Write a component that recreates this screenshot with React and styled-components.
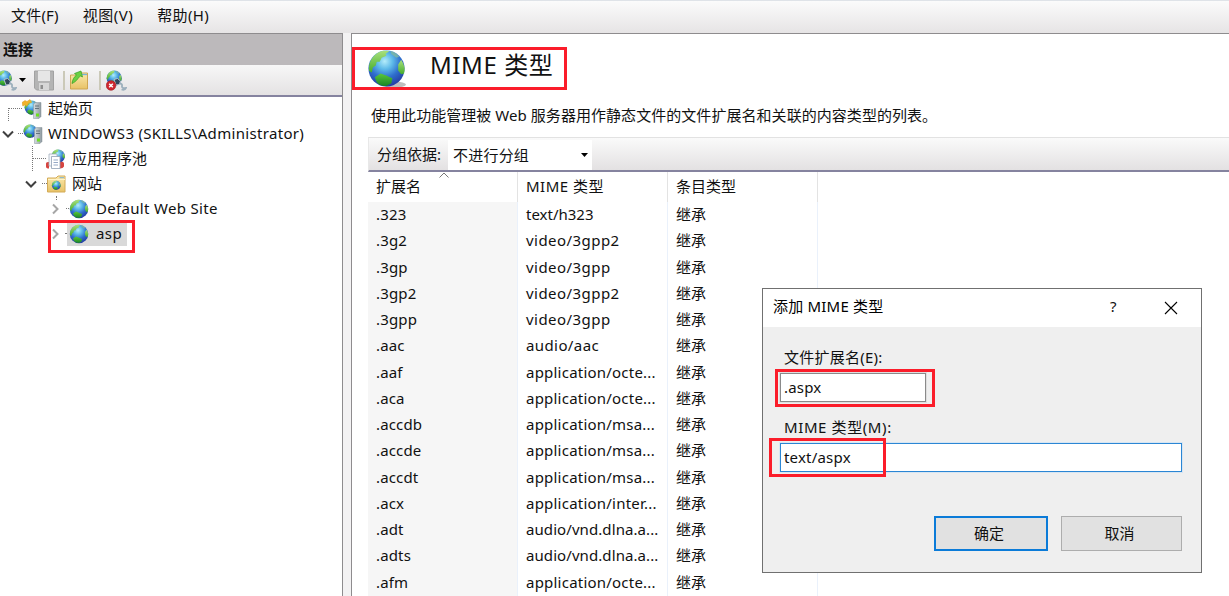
import React from "react";
import styled, { createGlobalStyle } from "styled-components";

const GlobalStyle = createGlobalStyle`
  *, *::before, *::after { box-sizing: border-box; }
  body {
    margin: 0;
    overflow: hidden;
    font-family: "Noto Sans", "Noto Sans CJK SC", sans-serif;
    font-size: 15px;
    color: #111;
  }
`;

const Window = styled.div`
  position: relative;
  display: flex;
  flex-direction: column;
  width: 1229px;
  height: 596px;
  overflow: hidden;
  background: #f3f2f3;
`;

const MenuBar = styled.nav`
  display: flex;
  gap: 24px;
  height: 33px;
  flex: none;
  padding: 0 11px;
  line-height: 29px;
  border-top: 1px solid #dfe3e8;
  background: linear-gradient(#fbfbfb, #e6e4e5);
`;

const Label = styled.span`
  white-space: nowrap;
  letter-spacing: ${(p) => p.$spacing || 0}px;
`;

const Panes = styled.div`
  display: flex;
  flex: 1;
  min-height: 0;
  gap: 8px;
`;

const Sidebar = styled.aside`
  width: 343px;
  flex: none;
  display: flex;
  flex-direction: column;
  border-top: 1px solid #8e8c8e;
  border-right: 1px solid #8e8c8e;
  background: #fff;
`;

const SidebarTitle = styled.div`
  height: 31px;
  padding-left: 3px;
  line-height: 30px;
  font-weight: 700;
  background: #bcb9bb;
`;

const IconBar = styled.div`
  display: flex;
  align-items: center;
  height: 32px;
  flex: none;
  border-bottom: 2px solid #85839f;
  background: linear-gradient(#f7f7f7, #e4e2e3);
`;

const BarSeparator = styled.i`
  width: 2px;
  height: 19px;
  margin: 0 5px 0 ${(p) => p.$before}px;
  background: #cbc9b8;
`;

const Tree = styled.div`
  margin-top: -1px;
`;

const TreeRow = styled.div`
  position: relative;
  display: flex;
  align-items: center;
  height: 25px;
  padding-left: ${(p) => p.$indent}px;
`;

const Arrow = styled.svg`
  width: 14px;
  height: 14px;
  flex: none;
  fill: none;
  stroke: ${(p) => (p.$open ? "#404040" : "#a6a6a6")};
  stroke-width: 2;
`;

const Dots = styled.i`
  width: ${(p) => p.$width}px;
  flex: none;
  border-top: 1px dotted #777;
`;

const TreeStem = styled.i`
  position: absolute;
  left: ${(p) => p.$left}px;
  top: ${(p) => p.$top}px;
  height: ${(p) => p.$height}px;
  border-left: 1px dotted #777;
`;

const NodeLabel = styled.span`
  height: 24px;
  line-height: 23px;
  padding: 0 5px 0 ${(p) => p.$gap || 6}px;
  white-space: nowrap;
  letter-spacing: ${(p) => p.$spacing || 0}px;
`;

const NodeBody = styled.span`
  display: flex;
  align-items: center;
  height: 24px;
  background: ${(p) => (p.$selected ? "#d9d9d9" : "transparent")};
`;

const Content = styled.main`
  flex: 1;
  min-width: 0;
  display: flex;
  flex-direction: column;
  padding-left: 16px;
  border-top: 1px solid #8e8c8e;
  border-left: 1px solid #8e8c8e;
  background: #fff;
`;

const Heading = styled.header`
  display: flex;
  align-items: center;
  gap: 24px;
  height: 63px;
  padding-top: 5px;
`;

const Title = styled.h1`
  margin: 0;
  font-size: 24px;
  line-height: 34px;
  height: 40px;
  font-weight: 400;
  letter-spacing: ${(p) => p.$spacing || 0}px;
`;

const Description = styled.p`
  margin: 0;
  height: 40px;
  padding-left: 3px;
  line-height: 37px;
  white-space: nowrap;
  letter-spacing: 0.05px;
`;

const GroupBar = styled.div`
  display: flex;
  height: 35px;
  flex: none;
  padding: 2px 0 0 8px;
  line-height: 28px;
  border-top: 1px solid #e2e2e2;
  border-left: 1px solid #e8e8e8;
  border-bottom: 2px solid #85839f;
  background: linear-gradient(#fafafa, #e3e1e2);
`;

const GroupSelect = styled.div`
  display: flex;
  align-items: center;
  justify-content: space-between;
  width: 144px;
  height: 30px;
  margin-left: 7px;
  padding: 0 4px 0 5px;
  background: #fff;
`;

const Grid = styled.div`
  display: grid;
  grid-template-columns: 150px 150px 150px;
  grid-template-rows: 30px;
  grid-auto-rows: 26.25px;
`;

const HeadCell = styled.div`
  position: relative;
  padding-left: 8px;
  line-height: 28px;
  border-right: 1px solid #e3e3e3;
  white-space: nowrap;
  letter-spacing: ${(p) => p.$spacing || 0}px;
`;

const Cell = styled.div`
  padding-left: 8px;
  line-height: 25px;
  white-space: nowrap;
  border-right: 1px solid #eaf1fb;
  letter-spacing: ${(p) => p.$spacing || 0}px;
  background: ${(p) => (p.$sorted ? "#f6f6f6" : "transparent")};
`;

const SortMark = styled.svg`
  position: absolute;
  left: 71px;
  top: 0;
`;

const Dialog = styled.section`
  position: absolute;
  left: 762px;
  top: 288px;
  width: 440px;
  height: 285px;
  border: 1px solid #707070;
  background: #efefef;
`;

const DialogBar = styled.div`
  display: flex;
  align-items: center;
  height: 38px;
  padding: 0 23px 0 10px;
  background: #fff;
`;

const DialogTitle = styled.span`
  flex: 1;
  height: 24px;
  line-height: 20px;
  color: #000;
  letter-spacing: ${(p) => p.$spacing || 0}px;
`;

const HelpMark = styled.span`
  width: 9px;
  height: 24px;
  line-height: 20px;
  margin-right: 45px;
`;

const Form = styled.div`
  display: flex;
  flex-direction: column;
  padding: 18px 19px 0 17px;
`;

const FieldLabel = styled.label`
  height: 28px;
  padding-left: 4px;
  line-height: 24px;
  letter-spacing: ${(p) => p.$spacing || 0}px;
`;

const Field = styled.div`
  width: ${(p) => p.$width}px;
  height: 29px;
  margin-bottom: 13px;
  padding-left: 3px;
  line-height: 27px;
  letter-spacing: 0.2px;
  border: 1px solid ${(p) => (p.$focused ? "#2b86d4" : "#8a8a8a")};
  box-shadow: 0 0 0 1px ${(p) => (p.$focused ? "#d7e6f3" : "#dedede")};
  background: #fff;
`;

const Actions = styled.div`
  display: flex;
  justify-content: flex-end;
  gap: 13px;
  padding-top: 31px;
`;

const Button = styled.button`
  width: ${(p) => p.$width}px;
  height: 35px;
  padding: 0 4px 3px 0;
  font: inherit;
  color: #111;
  border: ${(p) => (p.$primary ? "2px solid #0b7bd8" : "1px solid #adadad")};
  background: #e1e1e1;
`;

const Highlight = styled.div`
  position: absolute;
  left: ${(p) => p.$x}px;
  top: ${(p) => p.$y}px;
  width: ${(p) => p.$w}px;
  height: ${(p) => p.$h}px;
  border: 3px solid #fb1d2a;
  pointer-events: none;
`;

const Icon = styled.svg`
  flex: none;
  margin-left: ${(p) => p.$shift || 0}px;
`;

const GradientStore = styled.svg`
  position: absolute;
`;

function GlobeShape() {
  return (
    <g>
      <circle cx="20" cy="20" r="18.500" fill="url(#ocean)" />
      <path d="M2 22C1 12 8 3 17 1.700L23 2l-4 3 1 2-5 2-2 4-3 0-1 4-3 2-1 5-2-1z" fill="url(#land)" />
      <path d="M35 11q5 7 3 14l-3 1-3-4 0-6z" fill="url(#land)" />
      <path d="M8 29l6-4 5 2 7 3-1 5-5 3q-7 0-10-4z" fill="url(#landDark)" />
      <path d="M24 2q6 1 9 6l-3 1-5-4z" fill="#7fb9a0" opacity=".8" />
    </g>
  );
}

function Globe({ size = 20, shadow, shift }) {
  return (
    <Icon $shift={shift} width={size} height={size} viewBox="0 0 40 40">
      {shadow && <ellipse cx="28" cy="36.500" rx="12" ry="3.200" fill="#888" opacity=".55" />}
      <GlobeShape />
    </Icon>
  );
}

function GradientDefs() {
  return (
    <GradientStore width="0" height="0">
      <defs>
        <radialGradient id="ocean" cx=".45" cy=".3" r=".72">
          <stop offset="0" stopColor="#b4ecfa" />
          <stop offset=".3" stopColor="#5fbbe9" />
          <stop offset=".62" stopColor="#2f6fcd" />
          <stop offset="1" stopColor="#2339a0" />
        </radialGradient>
        <linearGradient id="land" x2="0" y2="1">
          <stop offset="0" stopColor="#a9e07c" />
          <stop offset="1" stopColor="#45ad2c" />
        </linearGradient>
        <linearGradient id="landDark" x2="0" y2="1">
          <stop offset="0" stopColor="#5cc83a" />
          <stop offset="1" stopColor="#1a8426" />
        </linearGradient>
        <linearGradient id="folder" x2="0" y2="1">
          <stop offset="0" stopColor="#fbe9ac" />
          <stop offset="1" stopColor="#e8c266" />
        </linearGradient>
        <linearGradient id="tower">
          <stop offset="0" stopColor="#d5dce0" />
          <stop offset="1" stopColor="#8d999f" />
        </linearGradient>
      </defs>
    </GradientStore>
  );
}

function Tower() {
  return (
    <g>
      <path d="M11.500 5l2-1.500h5.500v14L17 19.500h-5.500z" fill="url(#tower)" stroke="#87929a" strokeWidth=".5" />
      <path d="M13 7h4M13 9.500h4" stroke="#5e6b75" strokeWidth=".9" />
      <rect x="14" y="14.500" width="3" height="3" fill="#6de01f" />
    </g>
  );
}

function ServerIcon({ home }) {
  return (
    <Icon width="20" height="20" viewBox="0 0 20 20">
      <g transform={home ? "translate(2 1) scale(.38)" : "translate(0 0) scale(.36)"}>
        <GlobeShape />
      </g>
      {home && (
        <path d="M0 3.500L3 1.500l2 1L8 .5l1.500 3-3 .5L5 7 3 6 .8 7z" fill="#f0b32c" stroke="#d99a2a" strokeWidth=".5" />
      )}
      <Tower />
    </Icon>
  );
}

function ConnectIcon({ remove, shift }) {
  return (
    <Icon $shift={shift} width="21" height="21" viewBox="0 0 21 21">
      <g transform="translate(0 0) scale(.41)">
        <GlobeShape />
      </g>
      <path d="M8 9.500l3.500-1 3 2.500-1 3.500L10 15z" fill="#31465c" stroke="#c3ced6" strokeWidth=".9" />
      <path d="M13.500 13.500q3 0 2.500 2.500t4 2q-1 2.500-4.500 1.500" fill="none" stroke="#9db0bd" strokeWidth="1.800" />
      {remove && (
        <g>
          <circle cx="5" cy="15.500" r="4.800" fill="#cf2630" stroke="#a31c22" strokeWidth=".6" />
          <path d="M3.200 13.700l3.600 3.600M6.800 13.700l-3.600 3.600" stroke="#fff" strokeWidth="1.500" />
        </g>
      )}
    </Icon>
  );
}

function Caret() {
  return (
    <Icon width="7" height="4" viewBox="0 0 7 4">
      <path d="M0 0h7L3.500 4z" fill="#000" />
    </Icon>
  );
}

function SaveIcon() {
  return (
    <Icon $shift={8} width="20" height="21" viewBox="0 0 20 21">
      <path d="M.5 1h19v19h-17l-2-2z" fill="#b4b4b4" stroke="#a2a2a2" />
      <path d="M4 1h12v10H4z" fill="#e6e6e6" />
      <path d="M5 13h10v7H5z" fill="#d6d6d6" />
      <path d="M6.500 15h2.500v4H6.500z" fill="#8e8e8e" />
    </Icon>
  );
}

function UpFolderIcon() {
  return (
    <Icon width="18" height="20" viewBox="0 0 18 20">
      <path d="M.5 5h8l2-2h7v16H.5z" fill="url(#folder)" stroke="#cfa651" />
      <path d="M12 4.500h5" stroke="#79b4dc" strokeWidth="1.300" />
      <path d="M2 13.500C2.500 9.500 4 7 6.500 5L4.500 3.500 11 1l1.500 6-2-1C8 7.500 7.500 11 2 13.500z" fill="#6bd042" stroke="#359d22" strokeWidth=".7" />
    </Icon>
  );
}

function PoolIcon() {
  return (
    <Icon width="20" height="20" viewBox="0 0 20 20">
      <g transform="translate(5 0) scale(.36)">
        <GlobeShape />
      </g>
      <path d="M0 14.500q0-2 3-1.500v6.500q-3 0-3-2zM14 13q4-1 4 1.500v3q-1 2-4 2z" fill="#d64540" />
      <path d="M3 5h8v12H3z" fill="#f7f9fc" stroke="#a3b0bf" strokeWidth=".8" />
      <path d="M5.500 7.500h8.500v12H5.500z" fill="#fff" stroke="#8fa0b4" strokeWidth=".8" />
      <path d="M7.500 11h4.500M7.500 13.500h4.500M7.500 16h4.500" stroke="#8a9fc0" strokeWidth=".9" />
    </Icon>
  );
}

function SitesIcon() {
  return (
    <Icon width="19" height="18" viewBox="0 0 19 18">
      <path d="M.5 3h8.500l2-2h7v16H.5z" fill="url(#folder)" stroke="#d3ab58" />
      <path d="M1 4.500h17" stroke="#fff4c8" />
      <path d="M12.500 2.700h4.500" stroke="#7ab2d3" />
      <g transform="translate(4.500 5.500) scale(.24)">
        <GlobeShape />
      </g>
    </Icon>
  );
}

function TreeArrow({ open }) {
  return (
    <Arrow $open={open} viewBox="0 0 14 14">
      <path d={open ? "M2 4.500l5 5 5-5" : "M5 2.500l4.500 4.500L5 11.500"} />
    </Arrow>
  );
}

const mimeTypes = [
  [".323", "text/h323"],
  [".3g2", "video/3gpp2"],
  [".3gp", "video/3gpp"],
  [".3gp2", "video/3gpp2"],
  [".3gpp", "video/3gpp"],
  [".aac", "audio/aac"],
  [".aaf", "application/octe..."],
  [".aca", "application/octe..."],
  [".accdb", "application/msa..."],
  [".accde", "application/msa..."],
  [".accdt", "application/msa..."],
  [".acx", "application/inter..."],
  [".adt", "audio/vnd.dlna.a..."],
  [".adts", "audio/vnd.dlna.a..."],
  [".afm", "application/octe..."],
];

function typeSpacing(type) {
  if (type.startsWith("application")) return 0.22;
  if (type.startsWith("video")) return 0.45;
  if (type === "audio/aac") return 0.4;
  return type.startsWith("audio") ? 0.08 : 0;
}

export default function App() {
  return (
    <Window>
      <GlobalStyle />
      <GradientDefs />
      <MenuBar>
        <Label $spacing={0.2}>文件(F)</Label>
        <Label $spacing={0.5}>视图(V)</Label>
        <Label $spacing={0.3}>帮助(H)</Label>
      </MenuBar>
      <Panes>
        <Sidebar>
          <SidebarTitle>连接</SidebarTitle>
          <IconBar>
            <ConnectIcon shift={-4} />
            <Icon as="span" $shift={2} />
            <Caret />
            <SaveIcon />
            <BarSeparator $before={9} />
            <UpFolderIcon />
            <BarSeparator $before={11} />
            <ConnectIcon remove />
          </IconBar>
          <Tree>
            <TreeRow $indent={9}>
              <TreeStem $left={8} $top={12} $height={13} />
              <Dots $width={13} />
              <ServerIcon home />
              <NodeLabel>起始页</NodeLabel>
            </TreeRow>
            <TreeRow $indent={1}>
              <TreeArrow open />
              <Icon as="span" $shift={3} />
              <Dots $width={5} />
              <ServerIcon />
              <NodeLabel $gap={5} $spacing={0.32}>WINDOWS3 (SKILLS\Administrator)</NodeLabel>
            </TreeRow>
            <TreeRow $indent={33}>
              <TreeStem $left={32} $top={0} $height={25} />
              <Dots $width={13} />
              <PoolIcon />
              <NodeLabel>应用程序池</NodeLabel>
            </TreeRow>
            <TreeRow $indent={24}>
              <TreeArrow open />
              <Icon as="span" $shift={4} />
              <Dots $width={5} />
              <SitesIcon />
              <NodeLabel>网站</NodeLabel>
            </TreeRow>
            <TreeRow $indent={48}>
              <TreeStem $left={56} $top={0} $height={4} />
              <TreeArrow />
              <Icon as="span" $shift={4} />
              <Dots $width={3} />
              <Globe />
              <NodeLabel $gap={7} $spacing={0.32}>Default Web Site</NodeLabel>
            </TreeRow>
            <TreeRow $indent={48}>
              <TreeArrow />
              <Icon as="span" $shift={3} />
              <Dots $width={2} />
              <NodeBody $selected>
                <Globe size={20} shift={2} />
                <NodeLabel $gap={7} $spacing={0.4}>asp</NodeLabel>
              </NodeBody>
            </TreeRow>
          </Tree>
        </Sidebar>
        <Content>
          <Heading>
            <Globe size={39} shadow shift={-1} />
            <Title $spacing={0.6}>MIME 类型</Title>
          </Heading>
          <Description>使用此功能管理被 Web 服务器用作静态文件的文件扩展名和关联的内容类型的列表。</Description>
          <GroupBar>
            <Label>分组依据:</Label>
            <GroupSelect>
              <Label $spacing={0.2}>不进行分组</Label>
              <Caret />
            </GroupSelect>
          </GroupBar>
          <Grid>
            <HeadCell>
              扩展名
              <SortMark width="10" height="6" viewBox="0 0 10 6">
                <path d="M.5 5.500L5 1l4.500 4.500" fill="none" stroke="#777" />
              </SortMark>
            </HeadCell>
            <HeadCell $spacing={0.5}>MIME 类型</HeadCell>
            <HeadCell>条目类型</HeadCell>
            {mimeTypes.map(([ext, type]) => (
              <React.Fragment key={ext}>
                <Cell $sorted $spacing={0.15}>{ext}</Cell>
                <Cell $spacing={typeSpacing(type)}>{type}</Cell>
                <Cell>继承</Cell>
              </React.Fragment>
            ))}
          </Grid>
        </Content>
      </Panes>
      <Dialog>
        <DialogBar>
          <DialogTitle $spacing={0.2}>添加 MIME 类型</DialogTitle>
          <HelpMark>?</HelpMark>
          <svg width="14" height="14" viewBox="0 0 14 14">
            <path d="M1 1l12 12M13 1L1 13" stroke="#000" strokeWidth="1.100" />
          </svg>
        </DialogBar>
        <Form>
          <FieldLabel $spacing={0.25}>文件扩展名(E):</FieldLabel>
          <Field $width={146}>.aspx</Field>
          <FieldLabel $spacing={0.6}>MIME 类型(M):</FieldLabel>
          <Field $width={402} $focused>text/aspx</Field>
          <Actions>
            <Button $width={114} $primary>确定</Button>
            <Button $width={121}>取消</Button>
          </Actions>
        </Form>
      </Dialog>
      <Highlight $x={352} $y={47} $w={215} $h={43} />
      <Highlight $x={48} $y={220} $w={87} $h={33} />
      <Highlight $x={775} $y={369} $w={160} $h={38} />
      <Highlight $x={769} $y={438} $w={117} $h={39} />
    </Window>
  );
}
